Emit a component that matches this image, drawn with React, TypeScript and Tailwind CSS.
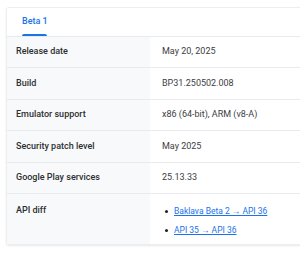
import React from 'react';

const rows: { label: string; value: string }[] = [
  { label: 'Release date', value: 'May 20, 2025' },
  { label: 'Build', value: 'BP31.250502.008' },
  { label: 'Emulator support', value: 'x86 (64-bit), ARM (v8-A)' },
  { label: 'Security patch level', value: 'May 2025' },
  { label: 'Google Play services', value: '25.13.33' },
];

const links = ['Baklava Beta 2 → API 36', 'API 35 → API 36'];

export default function App() {
  return (
    <div className="w-[300px] h-[254px] overflow-hidden bg-white font-['Roboto',sans-serif] text-[9px]">
      <div className="ml-[6px] mt-[7px] w-[320px] rounded-[3px] border border-[#eceef1] shadow-[0_1px_2px_rgba(60,64,67,0.12)] overflow-hidden">
        <div className="h-[29px] bg-white border-b border-[#e8eaed] flex items-end pl-[15px]">
          <div className="flex flex-col items-center">
            <span className="text-[#1a73e8] font-medium leading-none mb-[8px]">Beta 1</span>
            <div className="w-[25px] h-[2px] rounded-t-[2px] bg-[#1a73e8]" />
          </div>
        </div>
        {rows.map((row) => (
          <div key={row.label} className="flex h-[31.4px] border-b border-[#e8eaed]">
            <div className="w-[143px] bg-[#f8f9fa] flex items-center pl-[9px] font-medium text-[#2d2f32]">
              {row.label}
            </div>
            <div className="flex-1 flex items-center pl-[12px] text-[#3c4043]">{row.value}</div>
          </div>
        ))}
        <div className="flex h-[50px]">
          <div className="w-[143px] bg-[#f8f9fa] pl-[9px] pt-[10px] font-medium text-[#2d2f32]">API diff</div>
          <div className="flex-1 pl-[15px] pt-[13px] flex flex-col gap-[11px]">
            {links.map((l) => (
              <div key={l} className="flex items-center gap-[6px]">
                <span className="w-[3px] h-[3px] rounded-full bg-[#202124]" />
                <a href="#" className="text-[#1a73e8] text-[8.5px] underline leading-none">
                  {l}
                </a>
              </div>
            ))}
          </div>
        </div>
      </div>
    </div>
  );
}
